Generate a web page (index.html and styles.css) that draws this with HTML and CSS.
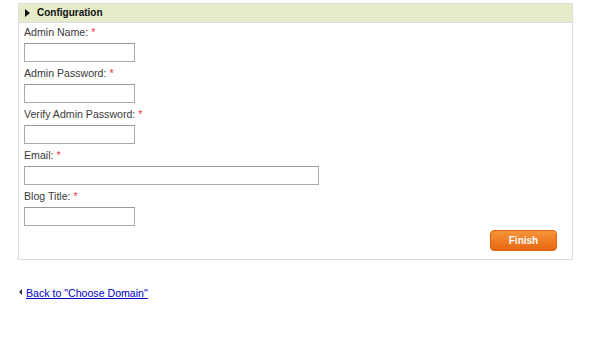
FILE: index.html
```html
<!DOCTYPE html>
<html lang="en">

<head>
    <meta charset="UTF-8">
    <link rel="stylesheet" href="styles.css">
    <title>Configuration</title>
</head>

<body>
    <div class="panel">
        <div class="panelHead">
            <span class="arrow"></span>Configuration
        </div>
        <div class="panelBody">
            <div class="field">
                <label>Admin Name: <em>*</em></label>
                <input type="text" class="short">
            </div>
            <div class="field">
                <label>Admin Password: <em>*</em></label>
                <input type="password" class="short">
            </div>
            <div class="field">
                <label>Verify Admin Password: <em>*</em></label>
                <input type="password" class="short">
            </div>
            <div class="field">
                <label>Email: <em>*</em></label>
                <input type="text" class="long">
            </div>
            <div class="field">
                <label>Blog Title: <em>*</em></label>
                <input type="text" class="short">
            </div>
            <div class="actions">
                <button class="finishBtn">Finish</button>
            </div>
        </div>
    </div>
    <div class="back">
        <span class="backArrow"></span><a href="#">Back to "Choose Domain"</a>
    </div>
</body>

</html>
```

FILE: styles.css
```css
* {
    padding: 0;
    margin: 0;
    box-sizing: border-box;
}

body {
    font-family: "Liberation Sans", Arial, sans-serif;
    font-size: 10.6px;
    color: #3a3a3a;
    background: #fff;
}

.panel {
    margin: 3px 0 0 18px;
    width: 555px;
    border: 1px solid #dcdcdc;
}

.panel .panelHead {
    height: 19px;
    line-height: 18px;
    padding-left: 6px;
    background: #e4ecc9;
    border-bottom: 1px solid #dcdcdc;
    font-size: 10px;
    font-weight: bold;
    color: #111;
}

.panel .panelHead .arrow {
    display: inline-block;
    width: 0;
    height: 0;
    border-top: 4px solid transparent;
    border-bottom: 4px solid transparent;
    border-left: 5px solid #111;
    margin-right: 7px;
    vertical-align: -1px;
}

.panel .panelBody {
    padding: 2px 15px 8px 5px;
}

.field label {
    display: block;
    line-height: 14px;
    margin-bottom: 4px;
}

.field label em {
    font-style: normal;
    color: #e3343b;
}

.field input {
    display: block;
    height: 19px;
    border: 1px solid #aaa;
    border-top-color: #999;
    margin-bottom: 4px;
    background: #fff;
}

.field .short {
    width: 111px;
}

.field .long {
    width: 295px;
}

.actions {
    display: flex;
    justify-content: flex-end;
}

.finishBtn {
    width: 67px;
    height: 21px;
    border: 1px solid #d9620e;
    border-radius: 4px;
    background: linear-gradient(#f6943a, #e8670f);
    color: #fff;
    font-family: "Liberation Sans", Arial, sans-serif;
    font-size: 10px;
    font-weight: bold;
    cursor: pointer;
}

.back {
    margin: 26px 0 0 19px;
    line-height: 14px;
}

.back .backArrow {
    display: inline-block;
    width: 0;
    height: 0;
    border-top: 3px solid transparent;
    border-bottom: 3px solid transparent;
    border-right: 3px solid #333;
    margin-right: 4px;
    vertical-align: 2px;
}

.back a {
    color: #0000cc;
}
```
